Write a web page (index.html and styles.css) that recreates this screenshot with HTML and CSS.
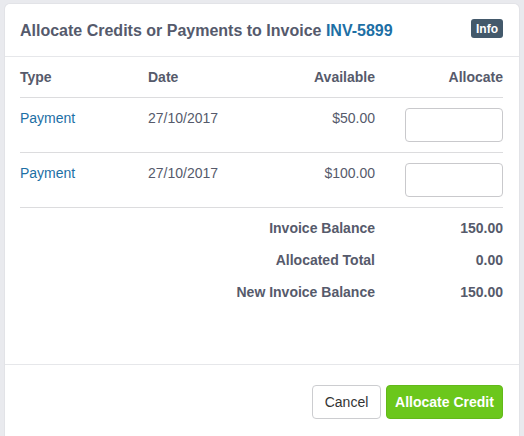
FILE: index.html
```html
<!DOCTYPE html>
<html>
<head>
<meta charset="utf-8">
<link rel="stylesheet" href="styles.css">
</head>
<body>
<div class="modal">
  <div class="modal-header">
    <h1 class="title">Allocate Credits or Payments to Invoice <a class="link">INV-5899</a></h1>
    <span class="badge">Info</span>
  </div>
  <div class="modal-body">
    <div class="row head">
      <div class="c-type">Type</div>
      <div class="c-date">Date</div>
      <div class="c-avail">Available</div>
      <div class="c-alloc">Allocate</div>
    </div>
    <div class="row item">
      <div class="c-type"><a class="link">Payment</a></div>
      <div class="c-date">27/10/2017</div>
      <div class="c-avail">$50.00</div>
      <div class="c-alloc"><input class="field" type="text"></div>
    </div>
    <div class="row item">
      <div class="c-type"><a class="link">Payment</a></div>
      <div class="c-date">27/10/2017</div>
      <div class="c-avail">$100.00</div>
      <div class="c-alloc"><input class="field" type="text"></div>
    </div>
    <div class="summary">
      <div class="s-row"><div class="s-label">Invoice Balance</div><div class="s-val">150.00</div></div>
      <div class="s-row"><div class="s-label">Allocated Total</div><div class="s-val">0.00</div></div>
      <div class="s-row"><div class="s-label">New Invoice Balance</div><div class="s-val">150.00</div></div>
    </div>
  </div>
  <div class="modal-footer">
    <button class="btn btn-default">Cancel</button>
    <button class="btn btn-primary">Allocate Credit</button>
  </div>
</div>
</body>
</html>
```
FILE: styles.css
```css
html, body {
  margin: 0;
  padding: 0;
  background: #e9eaee;
  height: 100%;
  overflow: hidden;
}
body {
  box-sizing: border-box;
  padding: 4px 5px 0 5px;
  font-family: "Liberation Sans", Arial, sans-serif;
  font-size: 14px;
  color: #565a6b;
}
.modal {
  background: #fff;
  border-radius: 5px 5px 0 0;
  height: 432px;
  overflow: hidden;
  box-shadow: 0 0 0 1px #e2e3e7;
}
.modal-header {
  height: 52px;
  border-bottom: 1px solid #e6e7ea;
  display: flex;
  align-items: center;
  justify-content: space-between;
  padding: 0 16px 0 15px;
}
.title {
  margin: 0;
  font-size: 16px;
  font-weight: bold;
  color: #555a6c;
  padding-top: 2px;
}
.link {
  color: #1d6fa5;
  text-decoration: none;
}
.badge {
  background: #43596b;
  color: #fff;
  font-size: 12px;
  font-weight: bold;
  border-radius: 3px;
  padding: 3px 5px 2px;
  line-height: 14px;
  margin-top: -4px;
}
.modal-body {
  padding: 0 16px 0 15px;
  height: 307px;
}
.row {
  display: grid;
  grid-template-columns: 128px 1fr 110px 128px;
  border-bottom: 1px solid #dcdcde;
}
.head {
  height: 40px;
  align-items: center;
  font-weight: bold;
}
.item {
  height: 54px;
}
.item > div {
  padding-top: 12px;
}
.c-avail, .c-alloc {
  text-align: right;
}
.item .c-alloc {
  padding-top: 10px;
}
.field {
  width: 98px;
  height: 34px;
  box-sizing: border-box;
  border: 1px solid #c9c9cc;
  border-radius: 4px;
  margin: 0;
  background: #fff;
}
.summary {
  padding-top: 4px;
}
.s-row {
  display: flex;
  justify-content: flex-end;
  height: 32px;
  align-items: center;
  font-weight: bold;
}
.s-label {
  text-align: right;
}
.s-val {
  width: 128px;
  text-align: right;
}
.modal-footer {
  border-top: 1px solid #e6e7ea;
  display: flex;
  justify-content: flex-end;
  gap: 5px;
  padding: 20px 16px 0 15px;
}
.btn {
  height: 34px;
  font-family: "Liberation Sans", Arial, sans-serif;
  font-size: 14px;
  border-radius: 4px;
  margin: 0;
  padding: 0;
  white-space: nowrap;
}
.btn-default {
  background: #fff;
  border: 1px solid #cccdd0;
  color: #333;
  width: 69px;
}
.btn-primary {
  background: #6bc71c;
  border: 1px solid #63b91a;
  color: #fff;
  font-weight: bold;
  width: 117px;
}
```
